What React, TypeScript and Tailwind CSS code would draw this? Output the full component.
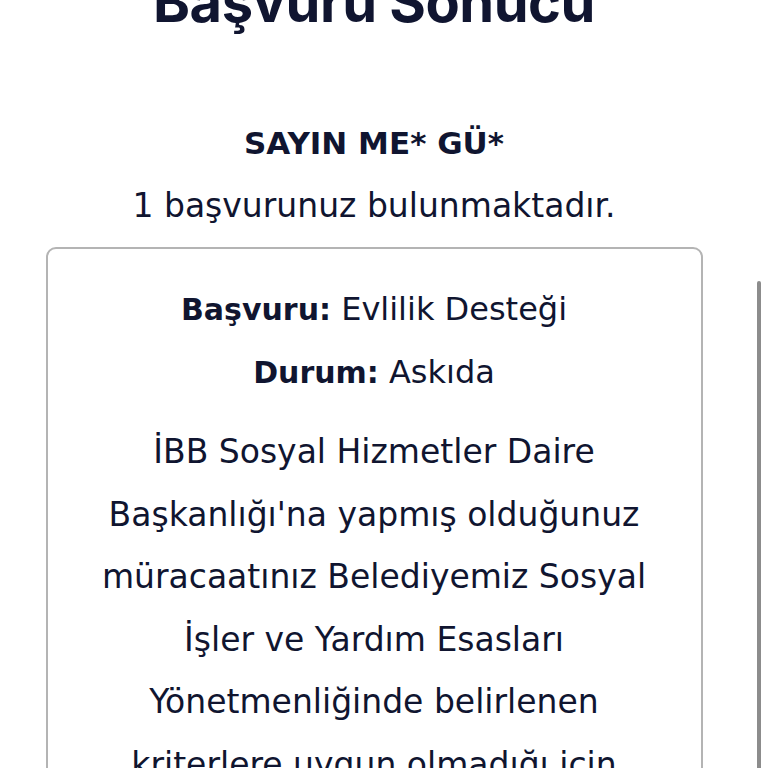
export default function App() {
  const lines = [
    'İBB Sosyal Hizmetler Daire',
    "Başkanlığı'na yapmış olduğunuz",
    'müracaatınız Belediyemiz Sosyal',
    'İşler ve Yardım Esasları',
    'Yönetmenliğinde belirlenen',
    'kriterlere uygun olmadığı için',
  ];

  return (
    <div className="relative h-[768px] w-[768px] overflow-hidden bg-white text-[#101530]">
      <div className="flex flex-col items-center pr-[20px] [font-family:'DejaVu_Sans',sans-serif]">
        <h1 className="-mt-[28px] text-[56px] font-bold leading-[60px] tracking-[-0.5px] [font-family:Inter,'Liberation_Sans',sans-serif]">
          Başvuru Sonucu
        </h1>

        <div className="mt-[91px] text-[31px] font-bold leading-[40px]">SAYIN ME* GÜ*</div>
        <div className="mt-[23px] text-[33px] leading-[40px]">1 başvurunuz bulunmaktadır.</div>

        <div className="mt-[21px] flex w-[657px] flex-col items-center rounded-[10px] border-2 border-[#b4b4b4] pt-[40px] text-center">
          <div className="text-[32px] leading-[40px]">
            <span className="text-[30px] font-bold">Başvuru:</span> Evlilik Desteği
          </div>
          <div className="mt-[22px] text-[32px] leading-[40px]">
            <span className="text-[30px] font-bold">Durum:</span> Askıda
          </div>
          <div className="mt-[28px] text-[33px] leading-[62.5px]">
            {lines.map((l) => (
              <div key={l}>{l}</div>
            ))}
          </div>
        </div>
      </div>

      <div className="absolute right-[7px] top-[281px] h-[500px] w-[4px] rounded-t-full bg-[#8c8c8c]" />
    </div>
  );
}
